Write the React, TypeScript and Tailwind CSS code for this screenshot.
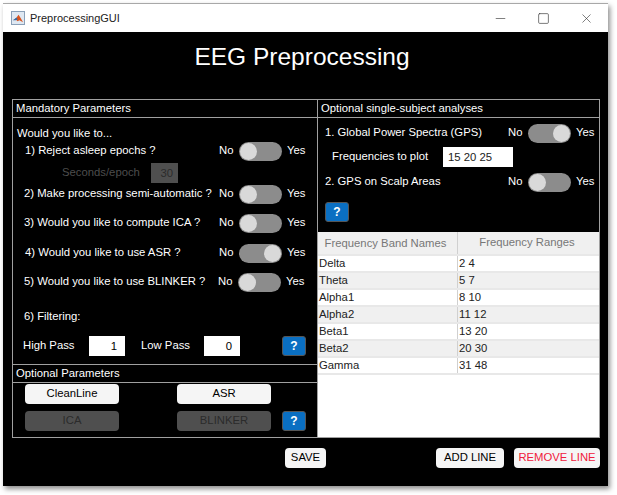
import { Minus, Square, X } from "lucide-react";

const bands = [
  ["Delta", "2 4"],
  ["Theta", "5 7"],
  ["Alpha1", "8 10"],
  ["Alpha2", "11 12"],
  ["Beta1", "13 20"],
  ["Beta2", "20 30"],
  ["Gamma", "31 48"],
];

function Toggle({ on = false }: { on?: boolean }) {
  return (
    <div
      className={`flex h-[19px] w-[43px] items-center rounded-full bg-[#8c8c8c] px-px ${
        on ? "justify-end" : "justify-start"
      }`}
    >
      <div className="h-[17px] w-[17px] rounded-full bg-[#d9d9d9]" />
    </div>
  );
}

function Switch({ on = false }: { on?: boolean }) {
  return (
    <div className="flex items-center text-white">
      <span className="w-[20px]">No</span>
      <Toggle on={on} />
      <span className="ml-[5px] w-[20px]">Yes</span>
    </div>
  );
}

function Help() {
  return (
    <button className="flex h-[20px] w-[24px] items-center justify-center rounded-[3px] border border-[#555] bg-[#0a6fc2] text-[12px] font-bold text-white">
      ?
    </button>
  );
}

function Question({ label, on, className }: { label: string; on?: boolean; className: string }) {
  return (
    <div className={`flex items-center justify-between pr-[10px] ${className}`}>
      <span>{label}</span>
      <Switch on={on} />
    </div>
  );
}

function PillButton({ label, disabled }: { label: string; disabled?: boolean }) {
  return (
    <button
      className={`h-[20px] w-[94px] rounded-[4px] text-center ${
        disabled ? "bg-[#4f4f4f] text-[#2b2b2b]" : "bg-[#f5f5f5] text-black"
      }`}
    >
      {label}
    </button>
  );
}

function FooterButton({ label, className }: { label: string; className: string }) {
  return (
    <button className={`h-[20px] rounded-[4px] bg-[#f5f5f5] text-center ${className}`}>{label}</button>
  );
}

function NumberBox({ value }: { value: string }) {
  return (
    <div className="h-[20px] w-[36px] bg-white pr-[8px] text-right leading-[20px] text-black">{value}</div>
  );
}

export default function App() {
  return (
    <div className="h-[495px] w-[617px] overflow-hidden bg-white pl-[3px] pt-[3px] font-['Liberation_Sans',Arial,sans-serif] text-[11.3px] leading-none">
      <div className="w-[605px] border-t border-[#a8a8a8] shadow-[2px_3px_5px_rgba(0,0,0,0.45)]">
        {/* Title bar */}
        <div className="flex h-[28px] items-center justify-between bg-white pl-[8px] pr-[14px]">
          <div className="flex items-center gap-[5px] text-[11px] text-[#222]">
            <div className="flex h-[14px] w-[14px] items-center justify-center border border-[#8aa0b8] bg-[#dfe8f2]">
              <svg viewBox="0 0 12 12" className="h-[11px] w-[11px]">
                <path d="M0 8 L4 5 L6 2 L8 5 L11 10 L7 8 L5 9 L3 7 Z" fill="#d9531e" />
                <path d="M0 8 L4 5 L5 7 L3 8 Z" fill="#2f6fb0" />
              </svg>
            </div>
            <span>PreprocessingGUI</span>
          </div>
          <div className="flex items-center gap-[29px] text-[#333]">
            <Minus size={15} strokeWidth={1} />
            <Square size={13} strokeWidth={1.2} />
            <X size={15} strokeWidth={1} />
          </div>
        </div>

        {/* Window body */}
        <div className="h-[454px] bg-black pl-[9px] pr-[8px]">
          <h1 className="h-[67px] pr-[8px] pt-[11px] text-center text-[24.5px] leading-[27px] text-white">
            EEG Preprocessing
          </h1>

          <div className="flex h-[339px] w-[588px] border border-[#a0a0a0] text-white">
            {/* Left column */}
            <div className="flex w-[305px] flex-col border-r border-[#a0a0a0]">
              <div className="flex h-[18px] items-center border-b border-[#a0a0a0] pl-[3px]">Mandatory Parameters</div>
              <div className="h-[246px] pl-[4px]">
                <div className="pt-[9px] leading-[12px]">Would you like to...</div>
                <Question label="1) Reject asleep epochs ?" className="mt-[2px] h-[20px] pl-[8px]" />
                <div className="flex h-[23px] items-center pl-[45px] text-[#4d4d4d]">
                  <span className="w-[89px]">Seconds/epoch</span>
                  <div className="h-[20px] w-[27px] bg-[#4f4f4f] pr-[5px] text-right leading-[20px] text-[#2b2b2b]">
                    30
                  </div>
                </div>
                <Question label="2) Make processing semi-automatic ?" className="h-[20px] pl-[7px]" />
                <Question label="3) Would you like to compute ICA ?" className="mt-[9px] h-[20px] pl-[7px]" />
                <Question label="4) Would you like to use ASR ?" on className="mt-[10px] h-[20px] pl-[8px]" />
                <Question label="5) Would you like to use BLINKER ?" className="mt-[9px] h-[20px] pl-[7px] pr-[11px]" />
                <div className="mt-[17px] pl-[7px] leading-[14px]">6) Filtering:</div>
                <div className="mt-[13px] flex h-[20px] items-center pl-[6px]">
                  <span className="w-[66px]">High Pass</span>
                  <NumberBox value="1" />
                  <span className="ml-[16px] w-[63px]">Low Pass</span>
                  <NumberBox value="0" />
                  <div className="ml-[42px]">
                    <Help />
                  </div>
                </div>
              </div>
              <div className="flex h-[19px] items-center border-y border-[#a0a0a0] pl-[3px]">Optional Parameters</div>
              <div className="flex flex-col gap-[7px] pl-[12px] pt-px">
                <div className="flex items-center">
                  <PillButton label="CleanLine" />
                  <div className="ml-[58px]">
                    <PillButton label="ASR" />
                  </div>
                </div>
                <div className="flex items-center">
                  <PillButton label="ICA" disabled />
                  <div className="ml-[58px]">
                    <PillButton label="BLINKER" disabled />
                  </div>
                  <div className="ml-[11px]">
                    <Help />
                  </div>
                </div>
              </div>
            </div>

            {/* Right column */}
            <div className="flex flex-1 flex-col">
              <div className="flex h-[18px] items-center border-b border-[#a0a0a0] pl-[3px]">
                Optional single-subject analyses
              </div>
              <div className="h-[114px] pl-[7px]">
                <div className="mt-[5px] flex h-[20px] items-center justify-between pr-[3px]">
                  <span>1. Global Power Spectra (GPS)</span>
                  <Switch on />
                </div>
                <div className="mt-[4px] flex h-[20px] items-center pl-[7px]">
                  <span className="w-[111px]">Frequencies to plot</span>
                  <div className="h-[20px] w-[70px] bg-white pl-[5px] leading-[20px] text-[#222]">15 20 25</div>
                </div>
                <div className="mt-[5px] flex h-[20px] items-center justify-between pr-[3px]">
                  <span>2. GPS on Scalp Areas</span>
                  <Switch />
                </div>
                <div className="mt-[10px]">
                  <Help />
                </div>
              </div>
              <div className="flex-1 bg-white text-[#222]">
                <div className="flex h-[22px] items-center bg-[#f0f0f0] text-center text-[#777]">
                  <span className="w-[140px] border-r border-[#d0d0d0] pr-[4px] leading-[22px]">Frequency Band Names</span>
                  <span className="flex-1 pr-[3px]">Frequency Ranges</span>
                </div>
                {bands.map(([name, range], i) => (
                  <div
                    key={name}
                    className={`flex h-[17px] items-center border-t-2 border-[#e8e8e8] ${
                      i % 2 === 1 ? "bg-[#f0f0f0]" : "bg-white"
                    }`}
                  >
                    <span className="w-[140px] border-r border-[#d0d0d0] pl-[1px] leading-[15px]">{name}</span>
                    <span className="pl-[1px]">{range}</span>
                  </div>
                ))}
                <div className="h-[2px] bg-[#e8e8e8]" />
              </div>
            </div>
          </div>

          {/* Footer buttons */}
          <div className="mt-[10px] flex items-center text-black">
            <FooterButton label="SAVE" className="ml-[273px] w-[41px]" />
            <FooterButton label="ADD LINE" className="ml-[110px] w-[68px]" />
            <FooterButton label="REMOVE LINE" className="ml-[10px] w-[86px] text-[#f0203c]" />
          </div>
        </div>
      </div>
    </div>
  );
}
